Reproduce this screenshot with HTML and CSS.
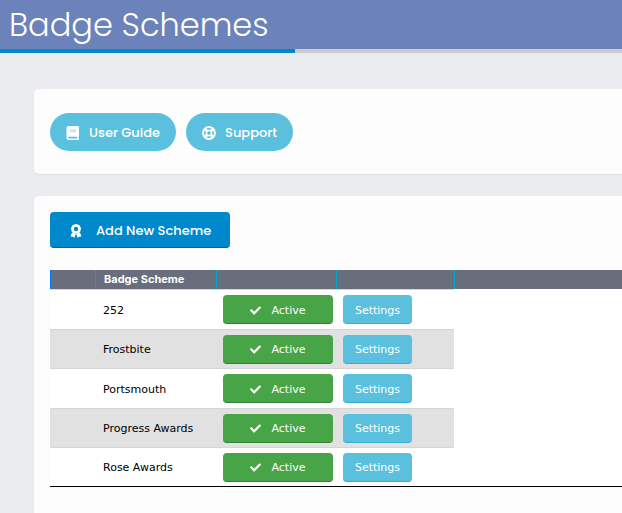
FILE: index.html
```
<!DOCTYPE html>
<html lang="en">
<head>
    <meta charset="UTF-8">
    <meta name="viewport" content="width=device-width, initial-scale=1.0">
    <title>Badge Schemes</title>
    <link rel="stylesheet" href="styles.css">
</head>
<body>
    <svg class="sprite" aria-hidden="true">
        <symbol id="check" viewBox="0 0 512 512"><path d="M173.9 439.4 7.5 273c-10-10-10-26.200 0-36.200l36.200-36.200c10-10 26.200-10 36.200 0L192 312.700 432.100 72.600c10-10 26.200-10 36.200 0l36.200 36.200c10 10 10 26.200 0 36.200L210.100 439.400c-10 10-26.200 10-36.200 0z"/></symbol>
    </svg>

    <header class="page-header">
        <h1>Badge Schemes</h1>
    </header>
    <div class="accent"><div class="accent-bar"></div></div>

    <main>
        <section class="card card-links">
            <a href="#guide" class="btn btn-pill">
                <svg class="icon" viewBox="0 0 14 14"><path fill-rule="evenodd" d="M2.500 0H12a1 1 0 0 1 1 1V10a1 1 0 0 1-.5.8V12.600H13V14H3a2.500 2.500 0 0 1-2.500-2.500V2A2 2 0 0 1 2.500 0zM3 10.700a.9.9 0 0 0 0 1.800H11V10.700z"/><path fill="#bfe6f2" d="M4 3.500H10V6.300H4z"/></svg>
                User Guide
            </a>
            <a href="#support" class="btn btn-pill">
                <svg class="icon" viewBox="0 0 14 14"><g fill="none" stroke="#fff"><circle cx="7" cy="7" r="6" stroke-width="1.800"/><circle cx="7" cy="7" r="2.600" stroke-width="1.500"/><path stroke-width="2.800" d="M2.900 2.900 5 5M11.100 2.900 9 5M2.900 11.100 5 9M11.100 11.100 9 9"/></g></svg>
                Support
            </a>
        </section>

        <section class="card card-schemes">
            <button type="button" class="btn btn-add">
                <svg class="icon" viewBox="0 0 14 14"><path fill-rule="evenodd" d="M7 0 8.700.5 10.400.9 11.100 2.500 12 4.100 11.700 5.900 11.300 7.600 9.900 8.900 7 9.900 4.100 8.900 2.700 7.600 2.300 5.900 2 4.100 2.900 2.500 3.600.9 5.300.5zM7 2.800a2.200 2.200 0 1 0 0 4.400 2.200 2.200 0 0 0 0-4.400z"/><path d="M3 8.600 6.800 10.100 5.300 14 4.100 12.700 1.500 12.600zM11 8.600 7.200 10.100 8.700 14 9.900 12.700 12.500 12.600z"/></svg>
                Add New Scheme
            </button>

            <table class="schemes">
                <colgroup>
                    <col class="col-gap"><col class="col-name"><col class="col-status"><col class="col-settings"><col>
                </colgroup>
                <thead>
                    <tr><th></th><th scope="col">Badge Scheme</th><th></th><th></th><th></th></tr>
                </thead>
                <tbody>
                    <tr>
                        <td></td><td>252</td>
                        <td><button type="button" class="btn-sm btn-active"><svg class="tick"><use href="#check"/></svg>Active</button></td>
                        <td><button type="button" class="btn-sm btn-settings">Settings</button></td>
                        <td></td>
                    </tr>
                    <tr>
                        <td></td><td>Frostbite</td>
                        <td><button type="button" class="btn-sm btn-active"><svg class="tick"><use href="#check"/></svg>Active</button></td>
                        <td><button type="button" class="btn-sm btn-settings">Settings</button></td>
                        <td></td>
                    </tr>
                    <tr>
                        <td></td><td>Portsmouth</td>
                        <td><button type="button" class="btn-sm btn-active"><svg class="tick"><use href="#check"/></svg>Active</button></td>
                        <td><button type="button" class="btn-sm btn-settings">Settings</button></td>
                        <td></td>
                    </tr>
                    <tr>
                        <td></td><td>Progress Awards</td>
                        <td><button type="button" class="btn-sm btn-active"><svg class="tick"><use href="#check"/></svg>Active</button></td>
                        <td><button type="button" class="btn-sm btn-settings">Settings</button></td>
                        <td></td>
                    </tr>
                    <tr>
                        <td></td><td>Rose Awards</td>
                        <td><button type="button" class="btn-sm btn-active"><svg class="tick"><use href="#check"/></svg>Active</button></td>
                        <td><button type="button" class="btn-sm btn-settings">Settings</button></td>
                        <td></td>
                    </tr>
                </tbody>
            </table>
        </section>
    </main>
</body>
</html>
```
FILE: styles.css
```
* {
    box-sizing: border-box;
}
body {
    margin: 0;
    min-height: 100vh;
    display: flex;
    flex-direction: column;
    background: #ebecf0;
    color: #000;
    font-family: Poppins, Inter, sans-serif;
}
.sprite {
    display: none;
}
.page-header {
    padding: 0 9px;
    background: #6c82ba;
}
h1 {
    margin: 0;
    color: #fff;
    font-size: 32px;
    font-weight: 300;
    line-height: 49px;
}
.accent {
    height: 4px;
    background: #ccc;
}
.accent-bar {
    width: 295px;
    height: 4px;
    background: #0088cc;
}
main {
    flex: 1;
    display: flex;
    flex-direction: column;
    gap: 22px;
    padding: 36px 0 0 34px;
}
.card {
    background: #fdfdfd;
    border-radius: 5px 0 0 5px;
    box-shadow: 0 1px 1px rgba(0, 0, 0, 0.05);
}
.card-links {
    display: flex;
    gap: 10px;
    padding: 24px 16px 23px;
}
.card-schemes {
    flex: 1;
    padding: 16px 0 26px 16px;
    border-radius: 5px 0 0 0;
}

/* buttons */
.btn {
    display: inline-flex;
    align-items: center;
    border: 0;
    color: #fff;
    font-family: inherit;
    font-size: 13px;
    font-weight: 500;
    text-decoration: none;
    cursor: pointer;
}
.icon {
    width: 14px;
    height: 14px;
    fill: #fff;
}
.btn-pill {
    gap: 9px;
    height: 38px;
    padding: 1px 16px 0;
    border-radius: 19px;
    background: #5bc0de;
}
.btn-add {
    display: flex;
    gap: 13px;
    height: 36px;
    padding: 2px 19px 0;
    border-radius: 4px;
    border-bottom: 1px solid #006699;
    background: #0088cc;
}
.btn-sm {
    display: flex;
    align-items: center;
    justify-content: center;
    height: 29px;
    padding: 2px 10px 0;
    border: 0;
    border-radius: 4px;
    color: #fff;
    font-family: Verdana, "DejaVu Sans", sans-serif;
    font-size: 11px;
    cursor: pointer;
}
.btn-active {
    gap: 10px;
    width: 110px;
    background: #47a447;
    border-bottom: 1px solid #358135;
}
.btn-settings {
    min-width: 69px;
    background: #5bc0de;
    border-bottom: 1px solid #31b0d5;
}
.tick {
    width: 11px;
    height: 11px;
    fill: #fff;
}

/* table */
.schemes {
    width: 100%;
    margin-top: 22px;
    table-layout: fixed;
    border-collapse: separate;
    border-spacing: 0;
    border-bottom: 1px solid #000;
    background: #fff;
    font-family: Verdana, "DejaVu Sans", sans-serif;
    font-size: 11px;
}
.col-gap {
    width: 45px;
}
.col-name {
    width: 121px;
}
.col-status {
    width: 120px;
}
.col-settings {
    width: 118px;
}
th {
    height: 19px;
    padding: 0 8px;
    border-left: 1px solid #00a9ce;
    background: #686e7b;
    color: #fff;
    font-family: Inter, sans-serif;
    font-weight: 700;
    line-height: 20px;
    text-align: left;
}
th:first-child {
    border-left-color: #007bff;
}
thead th {
    height: 19px;
    line-height: 19px;
}
td {
    height: 39px;
    padding: 1px 8px 0;
    border-top: 1px solid #d5d5d8;
}
tr:nth-child(odd) td {
    height: 40px;
}
tr:nth-child(even) td {
    background: #e1e1e1;
}
tr:last-child td {
    height: 39px;
}
td:nth-child(3),
td:nth-child(4) {
    padding: 0 0 0 7px;
}
tbody td:last-child,
tbody tr:nth-child(even) td:last-child {
    border-top: 0;
    background: #fff;
}
```
